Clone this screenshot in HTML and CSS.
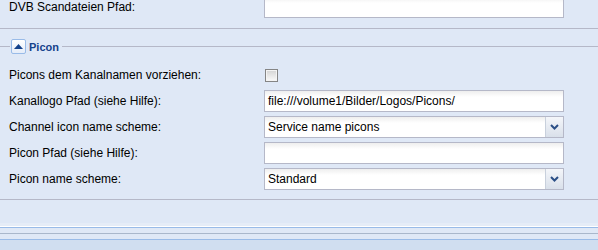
FILE: index.html
```html
<!DOCTYPE html>
<html lang="de">
<head>
    <meta charset="UTF-8">
    <title>Picon Einstellungen</title>
    <link rel="stylesheet" href="styles.css">
</head>
<body>

    <div class="section top">
        <div class="row">
            <span class="lbl">DVB Scandateien Pfad:</span>
            <div class="field"></div>
        </div>
    </div>

    <fieldset class="group">
        <legend>
            <span class="toggle">
                <svg width="9" height="5" viewBox="0 0 9 5"><polygon points="0,5 4.5,0 9,5" fill="#15428b"/></svg>
            </span>
            Picon
        </legend>

        <div class="row">
            <span class="lbl">Picons dem Kanalnamen vorziehen:</span>
            <span class="check"></span>
        </div>
        <div class="row">
            <span class="lbl">Kanallogo Pfad (siehe Hilfe):</span>
            <div class="field">file:///volume1/Bilder/Logos/Picons/</div>
        </div>
        <div class="row">
            <span class="lbl">Channel icon name scheme:</span>
            <div class="field combo">
                <span class="value">Service name picons</span>
                <span class="trigger"><svg width="9" height="6" viewBox="0 0 9 6"><polyline points="1,1 4.5,4.5 8,1" fill="none" stroke="#2b4f86" stroke-width="2"/></svg></span>
            </div>
        </div>
        <div class="row">
            <span class="lbl">Picon Pfad (siehe Hilfe):</span>
            <div class="field"></div>
        </div>
        <div class="row">
            <span class="lbl">Picon name scheme:</span>
            <div class="field combo">
                <span class="value">Standard</span>
                <span class="trigger"><svg width="9" height="6" viewBox="0 0 9 6"><polyline points="1,1 4.5,4.5 8,1" fill="none" stroke="#2b4f86" stroke-width="2"/></svg></span>
            </div>
        </div>
    </fieldset>

    <div class="footer">
        <div class="spacer"></div>
        <div class="toolbar"></div>
    </div>

</body>
</html>
```

FILE: styles.css
```css
body {
    margin: 0;
    background: #dfe8f6;
    font-family: "Liberation Sans", Arial, sans-serif;
    font-size: 12px;
    color: #000;
    overflow: hidden;
}
.top {
    margin-top: -4px;
    padding: 0 0 10px 8px;
    border-bottom: 1px solid #b5b8c8;
}
.row {
    display: flex;
    align-items: center;
    height: 22px;
}
.row + .row {
    margin-top: 4px;
}
.lbl {
    width: 256px;
    flex: none;
    padding-left: 1px;
    box-sizing: border-box;
}
.field {
    box-sizing: border-box;
    width: 300px;
    height: 22px;
    border: 1px solid #b5b8c8;
    background: linear-gradient(#eeeeee, #ffffff 6px);
    padding: 0 0 0 3px;
    line-height: 20px;
    white-space: nowrap;
    overflow: hidden;
}
.combo {
    display: flex;
    padding-right: 0;
}
.combo .value {
    flex: 1;
}
.trigger {
    width: 17px;
    flex: none;
    border-left: 1px solid #c8d0dc;
    background: linear-gradient(#f4f6fa, #d9e0ea);
    display: flex;
    align-items: center;
    justify-content: center;
}
.check {
    box-sizing: border-box;
    width: 13px;
    height: 13px;
    border: 1px solid #858585;
    box-shadow: inset 0 0 0 1px #f4f4f4;
    background: linear-gradient(#d4d4d4, #fafafa);
    margin-left: 1px;
}

/* Picon fieldset */
.group {
    margin: 10px 0 0;
    padding: 10px 0 9px 8px;
    border: 0;
    border-top: 1px solid #b5b8c8;
    border-bottom: 1px solid #b5b8c8;
}
.group legend {
    display: flex;
    align-items: center;
    margin-left: 2px;
    padding: 0 3px 0 1px;
    font-size: 11px;
    font-weight: bold;
    color: #15428b;
}
.toggle {
    box-sizing: border-box;
    width: 15px;
    height: 15px;
    border: 1px solid #99bbe8;
    border-radius: 2px;
    background: linear-gradient(#ffffff, #e4ecf8);
    display: flex;
    align-items: center;
    justify-content: center;
    margin-right: 3px;
}

/* bottom bar */
.spacer {
    height: 23px;
}
.toolbar {
    height: 24px;
    border-top: 3px solid #e5ecf7;
    background:
        linear-gradient(#ffffff 0 1px, #99bbe8 1px 2px, #dfe8f6 2px 7px, #a9b7cb 7px 8px, #dfe8f6 8px 13px, #99bbe8 13px 14px, #d0def0 14px);
}
```
